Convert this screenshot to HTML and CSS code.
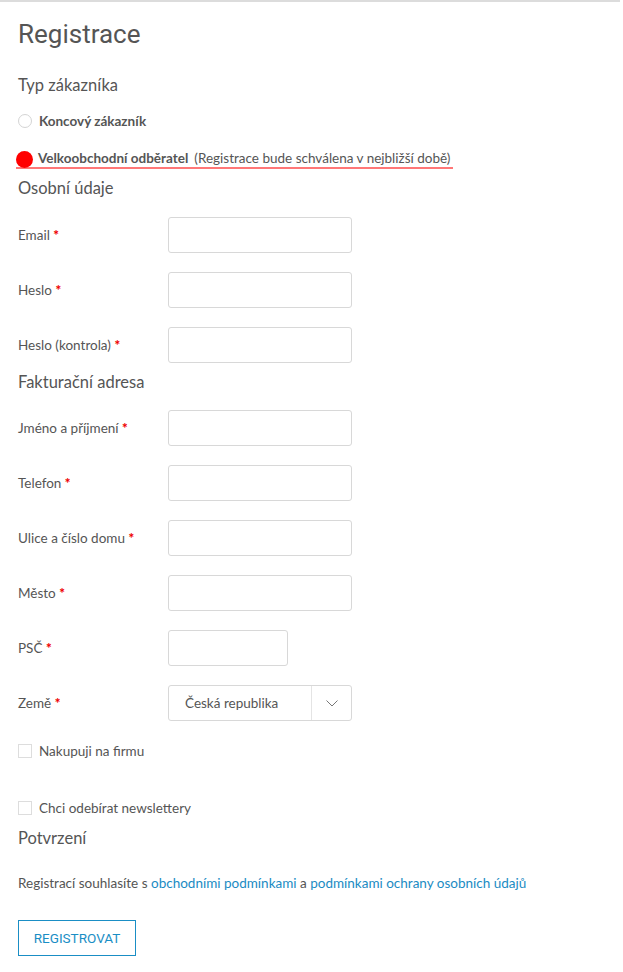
FILE: index.html
```html
<!DOCTYPE html>
<html lang="cs">
<head>
    <meta charset="UTF-8">
    <title>Registrace</title>
    <link rel="stylesheet" href="styles.css">
</head>
<body>
<div class="page">
    <h1 class="title">Registrace</h1>

    <h2 class="section first">Typ zákazníka</h2>
    <label class="radio">
        <span class="dot"></span>
        <b>Koncový zákazník</b>
    </label>
    <label class="radio checked">
        <span class="dot"></span>
        <b>Velkoobchodní odběratel</b>
        <span class="note">(Registrace bude schválena v nejbližší době)</span>
    </label>

    <h2 class="section">Osobní údaje</h2>
    <div class="row"><span class="lbl">Email <i>*</i></span><span class="inp"></span></div>
    <div class="row"><span class="lbl">Heslo <i>*</i></span><span class="inp"></span></div>
    <div class="row"><span class="lbl">Heslo (kontrola) <i>*</i></span><span class="inp"></span></div>

    <h2 class="section">Fakturační adresa</h2>
    <div class="rows2">
        <div class="row"><span class="lbl">Jméno a příjmení <i>*</i></span><span class="inp"></span></div>
        <div class="row"><span class="lbl">Telefon <i>*</i></span><span class="inp"></span></div>
        <div class="row"><span class="lbl">Ulice a číslo domu <i>*</i></span><span class="inp"></span></div>
        <div class="row"><span class="lbl">Město <i>*</i></span><span class="inp"></span></div>
        <div class="row"><span class="lbl">PSČ <i>*</i></span><span class="inp short"></span></div>
        <div class="row"><span class="lbl">Země <i>*</i></span>
            <span class="inp select">
                <span class="val">Česká republika</span>
                <span class="arrow">
                    <svg width="12" height="7" viewBox="0 0 12 7"><path d="M0.5 0.5 L6 6 L11.5 0.5" fill="none" stroke="#777" stroke-width="1"/></svg>
                </span>
            </span>
        </div>
    </div>

    <label class="check first"><span class="box"></span>Nakupuji na firmu</label>
    <label class="check second"><span class="box"></span>Chci odebírat newslettery</label>

    <h2 class="section confirm">Potvrzení</h2>
    <p class="consent">Registrací souhlasíte s <a href="">obchodními podmínkami</a> a <a href="">podmínkami ochrany osobních údajů</a></p>

    <button class="submit">REGISTROVAT</button>
</div>
</body>
</html>
```

FILE: styles.css
```css
*{
    margin: 0;
    padding: 0;
    box-sizing: border-box;
}
body{
    font-family: Lato, "Open Sans", sans-serif;
    color: #555;
    font-size: 13.5px;
    background: #fff;
    border-top: 2px solid #dcdcdc;
    margin-right: 3px;
}
.page{
    padding: 16px 18px 0;
}
.title{
    font-family: Roboto, sans-serif;
    font-weight: 400;
    font-size: 26px;
    line-height: 32px;
    color: #555;
}
.section{
    font-weight: 400;
    font-size: 16.5px;
    line-height: 24px;
    height: 24px;
    margin-top: 7px;
    color: #555;
}
.section.first{
    margin-top: 23px;
}
.section.confirm{
    margin-top: 8px;
}
.radio{
    display: flex;
    align-items: center;
    height: 20px;
    margin-top: 14px;
    white-space: nowrap;
}
.radio b{
    margin-left: 7px;
}
.radio .dot{
    width: 14px;
    height: 14px;
    border: 1px solid #d4d4d4;
    border-radius: 50%;
}
.radio.checked{
    margin-top: 18px;
    margin-left: -2px;
    border-bottom: 2px solid #f77;
    width: 437px;
    height: 20px;
}
.radio.checked .dot{
    width: 17px;
    height: 17px;
    border: none;
    background: #f00;
    margin-top: 2px;
}
.radio.checked b{
    margin-left: 5px;
}
.radio .note{
    margin-left: 6px;
}
.row{
    display: flex;
    align-items: center;
    height: 36px;
    margin-top: 19px;
}
.section + .row{
    margin-top: 17px;
}
.rows2 .row:first-child{
    margin-top: 16px;
}
.lbl{
    width: 150px;
}
.lbl i{
    font-style: normal;
    font-weight: 900;
    color: #e00;
}
.inp{
    width: 184px;
    height: 36px;
    border: 1px solid #d8d8d8;
    border-radius: 3px;
}
.inp.short{
    width: 120px;
}
.inp.select{
    display: flex;
    align-items: center;
    color: #555;
}
.select .val{
    flex: 1;
    padding-left: 16px;
}
.select .arrow{
    width: 40px;
    height: 34px;
    border-left: 1px solid #e4e4e4;
    display: flex;
    align-items: center;
    justify-content: center;
}
.check{
    display: flex;
    align-items: center;
    height: 20px;
}
.check.first{
    margin-top: 20px;
}
.check.second{
    margin-top: 37px;
}
.check .box{
    width: 14px;
    height: 14px;
    border: 1px solid #ddd;
    margin-right: 7px;
}
.consent{
    margin-top: 23px;
    line-height: 20px;
}
.consent a{
    color: #1b8bc3;
    text-decoration: none;
}
.submit{
    margin-top: 27px;
    width: 118px;
    height: 36px;
    border: 1.5px solid #1a8ec5;
    background: #fff;
    color: #1a8ec5;
    font-family: Roboto, sans-serif;
    font-size: 13.5px;
    cursor: pointer;
}
```
